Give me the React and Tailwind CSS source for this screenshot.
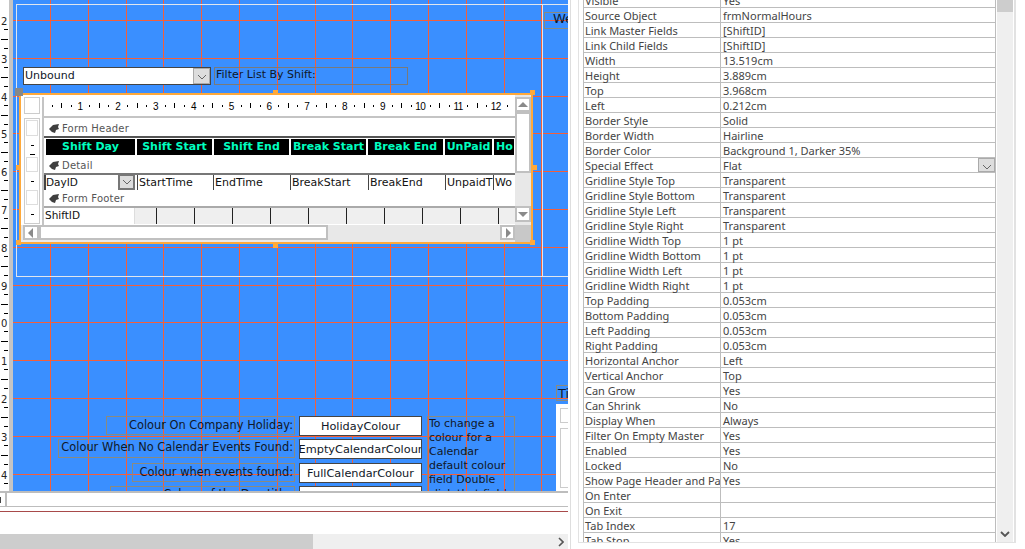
import React from "react";

const BLUE = "bg-[#3a8fff]";
const vLines = Array.from({ length: 14 }, (_, i) => Math.round(50 + 37.8 * i) - 13);
const hLines = Array.from({ length: 13 }, (_, i) => Math.round(20 + 37.8 * i));
const gutter = Array.from({ length: 14 }, (_, i) => ({ y: Math.round(20 + 37.8 * i), d: (2 + i) % 10 }));

const props = [
  ["Visible", "Yes"], ["Source Object", "frmNormalHours"], ["Link Master Fields", "[ShiftID]"], ["Link Child Fields", "[ShiftID]"],
  ["Width", "13.519cm"], ["Height", "3.889cm"], ["Top", "3.968cm"], ["Left", "0.212cm"], ["Border Style", "Solid"],
  ["Border Width", "Hairline"], ["Border Color", "Background 1, Darker 35%"], ["Special Effect", "Flat"],
  ["Gridline Style Top", "Transparent"], ["Gridline Style Bottom", "Transparent"], ["Gridline Style Left", "Transparent"],
  ["Gridline Style Right", "Transparent"], ["Gridline Width Top", "1 pt"], ["Gridline Width Bottom", "1 pt"],
  ["Gridline Width Left", "1 pt"], ["Gridline Width Right", "1 pt"], ["Top Padding", "0.053cm"], ["Bottom Padding", "0.053cm"],
  ["Left Padding", "0.053cm"], ["Right Padding", "0.053cm"], ["Horizontal Anchor", "Left"], ["Vertical Anchor", "Top"],
  ["Can Grow", "Yes"], ["Can Shrink", "No"], ["Display When", "Always"], ["Filter On Empty Master", "Yes"], ["Enabled", "Yes"],
  ["Locked", "No"], ["Show Page Header and Page Footer", "Yes"], ["On Enter", ""], ["On Exit", ""], ["Tab Index", "17"], ["Tab Stop", "Yes"],
];

const Chevron = ({ className = "", color = "#666", width = 1 }) => (
  <svg viewBox="0 0 10 6" className={`w-[10px] h-[6px] ${className}`}>
    <polyline points="1,1 5,5 9,1" fill="none" stroke={color} strokeWidth={width} />
  </svg>
);

const Tri = ({ dir }) => {
  const pts = { up: "0,7 5,2 10,7", down: "0,3 5,8 10,3", left: "7,0 2,5 7,10", right: "3,0 8,5 3,10" }[dir];
  return (
    <svg viewBox="0 0 10 10" className="w-[10px] h-[10px]">
      <polygon points={pts} fill="#8a8a8a" />
    </svg>
  );
};

const ScrollBtn = ({ dir, className = "" }) => (
  <div className={`flex items-center justify-center bg-white border-2 border-[#c0c0c0] ${className}`}>
    <Tri dir={dir} />
  </div>
);

const Grip = () => (
  <svg viewBox="0 0 10 9" className="w-[10px] h-[9px] shrink-0">
    <polygon points="0,5 4,1 10,0 9,3 10,5 7,6 6,9 3,8" fill="#3f3f3f" />
  </svg>
);

const SectionBar = ({ label, className }) => (
  <div className={`flex items-center gap-[3px] pl-[5px] text-[#555] text-[10px] tracking-[0.2px] bg-white shrink-0 ${className}`}>
    <Grip />
    <span>{label}</span>
  </div>
);

const heads = [
  ["Shift Day", "w-[89px] justify-center"], ["Shift Start", "w-[75px] justify-center"], ["Shift End", "w-[75px] justify-center"], ["Break Start", "w-[75px] justify-center"],
  ["Break End", "w-[75px] justify-center"], ["UnPaid", "w-[47px] justify-center"], ["Ho", "w-[20px] justify-start pl-[2px]"],
];
const details = [
  ["StartTime", "w-[76px]"], ["EndTime", "w-[77px]"], ["BreakStart", "w-[78px]"], ["BreakEnd", "w-[77px]"], ["UnpaidT", "w-[48px]"], ["Wo", "w-[21px]"],
];

function Subform() {
  const digits = Array.from({ length: 12 }, (_, i) => i + 1);
  return (
    <div className="absolute left-[6px] top-[93px] w-[514px] h-[151px] border-2 border-[#ffa93a] bg-white flex flex-col">
      <div className="flex h-[130px]">
        <div className="w-[494px] flex flex-col overflow-hidden">
          <div className="flex h-[23px] shrink-0 pt-[2px] pl-[3px] gap-[2px]">
            <div className="w-[16px] h-[17px] border border-[#ccc]" />
            <div className="relative flex-1 border-l-2 border-b-2 border-[#c4c4c4] font-['Liberation_Sans',sans-serif] text-[10px] tracking-[-0.6px] text-black">
              {digits.map((n) => {
                const c = 80 + 37.8 * (n - 1) - 44;
                return (
                  <React.Fragment key={n}>
                    <span className="absolute top-[2px] -translate-x-1/2" style={{ left: c }}>{n}</span>
                    {[-28.35, -9.45].map((o) => (
                      <i key={o} className="absolute top-[8px] w-px h-[2px] bg-black" style={{ left: Math.round(c + o) }} />
                    ))}
                    <i className="absolute top-[6px] w-px h-[5px] bg-black" style={{ left: Math.round(c - 18.9) }} />
                  </React.Fragment>
                );
              })}
              <i className="absolute top-[8px] w-px h-[2px] bg-black left-[463px]" />
            </div>
          </div>
          <div className="flex flex-1 pl-[3px]">
            <div className="w-[16px] h-[106px] border border-[#ccc] flex flex-col items-center text-[#222]">
              <div className="w-[12px] h-[16px] mt-[1px] border border-[#ddd]" />
              <i className="w-[3px] h-px bg-black mt-[9px]" />
              <i className="w-[5px] h-px bg-black mt-[8px]" />
              <div className="w-[12px] h-[15px] mt-[2px] border border-[#ddd]" />
              <i className="w-[3px] h-px bg-black mt-[9px]" />
              <div className="w-[12px] h-[15px] mt-[8px] border border-[#ddd]" />
              <i className="w-[3px] h-px bg-black mt-[9px]" />
            </div>
            <div className="ml-[2px] w-[473px] border-l-2 border-[#c4c4c4] flex flex-col overflow-hidden">
              <SectionBar label="Form Header" className="h-[18px] pt-[2px]" />
              <div className="h-[21px] border-t-2 border-[#555] flex gap-[2px] pl-[2px] pt-px shrink-0">
                {heads.map(([t, w]) => (
                  <div key={t} className={`${w} shrink-0 h-[16px] bg-black text-[#00ffc0] font-bold text-[11px] flex items-center whitespace-nowrap overflow-hidden`}>
                    {t}
                  </div>
                ))}
              </div>
              <SectionBar label="Detail" className="h-[16px]" />
              <div className="h-[17px] flex text-[11px] text-[#111] leading-[15px] shrink-0 border-t-2 border-[#777]">
                <div className="w-[91px] mr-[2px] shrink-0 border-l-2 border-[#444] flex justify-between text-[10.5px]">
                  <span>DayID</span>
                  <div className="w-[17px] bg-[#ddd] border-2 border-[#777] -mt-px flex items-center justify-center"><Chevron /></div>
                </div>
                {details.map(([t, w]) => (
                  <div key={t} className={`${w} shrink-0 border-l border-[#444] pl-[1px] overflow-hidden whitespace-nowrap`}>{t}</div>
                ))}
              </div>
              <SectionBar label="Form Footer" className="h-[16px] pt-px" />
              <div className="h-[18px] flex shrink-0 bg-[#efefef] text-[10.5px] text-[#111] border-t-2 border-[#aaa]">
                <div className="w-[91px] shrink-0 bg-white border-r border-[#ddd] pl-[1px] leading-[14px]">ShiftID</div>
                <div className="w-[22px] border-r border-[#222] shrink-0" />
                {Array.from({ length: 9 }, (_, i) => (
                  <div key={i} className="w-[38px] border-r border-[#222] shrink-0" />
                ))}
              </div>
            </div>
          </div>
        </div>
        <div className="w-[16px] flex flex-col pt-[2px] bg-[#e8e8e8]">
          <ScrollBtn dir="up" className="h-[15px] shrink-0" />
          <div className="h-[61px] bg-white border-2 border-[#c0c0c0] shrink-0" />
          <div className="flex-1" />
          <ScrollBtn dir="down" className="h-[16px] shrink-0 mb-[3px]" />
        </div>
      </div>
      <div className="flex h-[17px] bg-[#e8e8e8]">
        <ScrollBtn dir="left" className="w-[16px] h-[15px] ml-[2px] shrink-0" />
        <div className="w-[289px] h-[15px] bg-white border-2 border-[#c0c0c0] shrink-0" />
        <div className="flex-1" />
        <ScrollBtn dir="right" className="w-[15px] h-[15px] shrink-0" />
        <div className="w-[16px] bg-[#c8c8c8] shrink-0" />
      </div>
    </div>
  );
}

const Handle = ({ className }) => <div className={`absolute w-[5px] h-[5px] bg-[#ffa93a] ${className}`} />;

function Canvas() {
  return (
    <div className={`relative w-[555px] h-[491px] overflow-hidden ${BLUE} font-['DejaVu_Sans',sans-serif] text-[11px] text-[#101828]`}>
      <svg width="555" height="491" className="absolute left-0 top-0" shapeRendering="crispEdges">
        {vLines.map((x) => <line key={x} x1={x + 0.5} x2={x + 0.5} y1="0" y2="491" stroke="#f45f3a" />)}
        {hLines.map((y) => <line key={y} x1="0" x2="555" y1={y + 0.5} y2={y + 0.5} stroke="#f45f3a" />)}
      </svg>
      <div className="absolute left-[3px] top-[4px] w-[552px] h-[273px] border border-r-0 border-[#e0e6ee]" />
      <div className="absolute left-[529px] top-[4px] w-px h-[273px] bg-[#e0e6ee]" />

      <div className="absolute left-[531px] top-[12px] w-[30px] h-[17px] border border-[#8a8a80] pl-[8px] leading-[12px] text-[13px]">We</div>

      <div className="absolute left-[10px] top-[67px] w-[188px] h-[18px] bg-white border border-[#444] flex justify-between pl-[1px] leading-[16px]">
        <span>Unbound</span>
        <div className="w-[17px] bg-[#ddd] border border-[#aaa] flex items-center justify-center"><Chevron className="mt-[2px]" /></div>
      </div>
      <div className="absolute left-[201px] top-[67px] w-[194px] h-[18px] border border-[#7a7a7a] pl-[1px] leading-[14px]">Filter List By Shift:</div>

      <Subform />
      <div className="absolute left-[2px] top-[88px] w-[8px] h-[8px] bg-[#888]" />
      <Handle className="left-[260px] top-[90px] h-[4px]" />
      <Handle className="left-[517px] top-[90px]" />
      <Handle className="left-[519px] top-[165px]" />
      <Handle className="left-[517px] top-[240px]" />
      <Handle className="left-[260px] top-[243px] h-[3px]" />
      <Handle className="left-[3px] top-[240px]" />
      <Handle className="left-[3px] top-[165px]" />

      <div className="absolute left-[93px] top-[416px] w-[189px] h-[19px] border border-[#8a8a80] text-right pr-[1px] leading-[16px] text-[11.4px] whitespace-nowrap">Colour On Company Holiday:</div>
      <div className="absolute left-[45px] top-[439px] w-[237px] h-[19px] border border-[#8a8a80] text-right pr-[1px] leading-[14px] text-[11.4px] whitespace-nowrap">Colour When No Calendar Events Found:</div>
      <div className="absolute left-[119px] top-[463px] w-[163px] h-[19px] border border-[#8a8a80] text-right pr-[1px] leading-[16px] text-[11.4px] whitespace-nowrap">Colour when events found:</div>
      <div className="absolute left-[97px] top-[486px] w-[185px] h-[19px] border border-[#8a8a80] text-right pr-[1px] leading-[14px] text-[11.4px] whitespace-nowrap">Colour of the Day title:</div>

      {[["top-[416px]", "HolidayColour"], ["top-[439px]", "EmptyCalendarColour"], ["top-[463px]", "FullCalendarColour"], ["top-[486px]", "DayTitleColour"]].map(([t, s]) => (
        <div key={s} className={`absolute left-[286px] ${t} w-[123px] h-[20px] bg-white border border-[#444] flex justify-center overflow-hidden leading-[19px] text-[11.3px] whitespace-nowrap`}>{s}</div>
      ))}

      <div className="absolute left-[414px] top-[416px] w-[88px] h-[90px] border border-[#8a8a80] pl-[1px] leading-[14px]">
        To change a colour for a Calendar default colour field Double click that field
      </div>

      <div className="absolute left-[543px] top-[385px] w-[20px] h-[16px] border border-[#8a8a80] pl-[1px] leading-[15px] text-[13px]">Ti</div>
      <div className="absolute left-[543px] top-[404px] w-[20px] h-[100px] bg-white">
        <div className="ml-[4px] mt-[4px] h-[15px] border border-[#ccc]" />
        <div className="ml-[4px] mt-[5px] h-[60px] border-y border-l border-[#ccc]" />
      </div>
    </div>
  );
}

export default function App() {
  return (
    <div className="w-[1025px] h-[549px] overflow-hidden bg-white flex">
      <div className="w-[570px] shrink-0 flex flex-col">
        <div className="flex h-[491px] pr-[2px]">
          <div className="relative w-[9px] overflow-hidden font-['DejaVu_Sans',sans-serif] text-[10px] text-[#222]">
            {gutter.map(({ y, d }) => (
              <React.Fragment key={y}>
                <span className="absolute left-px leading-[12px]" style={{ top: y - 4 }}>{d}</span>
                <i className="absolute left-[4px] w-[4px] h-px bg-black" style={{ top: y + 9 }} />
                <i className="absolute left-[1px] w-[7px] h-px bg-black" style={{ top: y + 19 }} />
                <i className="absolute left-[4px] w-[4px] h-px bg-black" style={{ top: y + 28 }} />
              </React.Fragment>
            ))}
          </div>
          <div className="w-[4px] bg-[#c4c4c4]" />
          <Canvas />
        </div>
        <div className="h-[16px] border-t-2 border-b border-[#bdbdbd] flex mr-[2px] shrink-0">
          <div className="w-[7px] border-r-2 border-[#bdbdbd] flex items-center">
            <i className="w-px h-[6px] bg-[#444]" />
          </div>
        </div>
        <div className="h-[4px] shrink-0" />
        <div className="h-px bg-[#a84a4a] mr-[2px] shrink-0" />
        <div className="h-[22px] shrink-0" />
        <div className="h-[15px] flex mr-[2px] bg-[#efefef] items-center shrink-0">
          <div className="w-[313px] h-full bg-[#cdcdcd]" />
          <div className="flex-1 flex justify-end pr-[4px]">
            <svg viewBox="0 0 6 10" className="w-[6px] h-[10px]">
              <polyline points="1,1 5,5 1,9" fill="none" stroke="#555" strokeWidth="1.6" />
            </svg>
          </div>
        </div>
      </div>

      <div className="w-[455px] border-l border-[#dedede] pl-[7px] font-['Noto_Sans',sans-serif]">
        <div className="w-[438px] h-[543px] border-l border-b border-r-2 border-[#e2e2e2] flex pl-[4px] overflow-hidden">
          <div className="w-[413px] shrink-0 overflow-hidden">
            <div className="-mt-[7px] border-l border-r border-[#bdbdbd]">
              {props.map(([k, v]) => (
                <div key={k} className="flex h-[15px] border-b border-[#bdbdbd] text-[11px] leading-[16px] text-[#444]">
                  <div className="w-[137px] shrink-0 border-r border-[#bdbdbd] pl-[1px] overflow-x-clip whitespace-nowrap">{k}</div>
                  <div className="flex-1 pl-[2px] flex justify-between whitespace-nowrap">
                    <span>{v}</span>
                    {k === "Special Effect" && (
                      <div className="w-[17px] h-[14px] bg-[#ddd] border border-[#aaa] flex items-center justify-center"><Chevron className="mt-[3px]" /></div>
                    )}
                  </div>
                </div>
              ))}
            </div>
          </div>
          <div className="ml-[1px] w-[16px] h-full bg-[#efefef] flex flex-col justify-between">
            <div className="h-[12px] bg-[#cdcdcd]" />
            <div className="flex justify-center pb-[5px]"><Chevron color="#555" width={1.8} /></div>
          </div>
        </div>
      </div>
    </div>
  );
}
